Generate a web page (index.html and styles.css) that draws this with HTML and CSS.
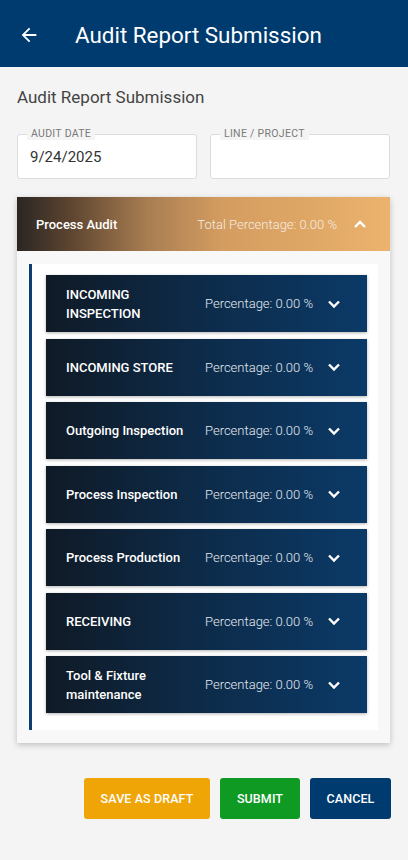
FILE: index.html
```html
<!DOCTYPE html>
<html>
<head>
<meta charset="utf-8">
<link rel="stylesheet" href="styles.css">
</head>
<body>
<header class="appbar">
  <svg class="back" width="22" height="22" viewBox="0 0 24 24"><path d="M20 11H7.83l5.59-5.59L12 4l-8 8 8 8 1.41-1.41L7.83 13H20v-2z" fill="#fff"/></svg>
  <h1 class="appbar-title">Audit Report Submission</h1>
</header>
<main class="page">
  <h2 class="subtitle">Audit Report Submission</h2>
  <div class="fields">
    <div class="field"><span class="field-label">AUDIT DATE</span><span class="field-value">9/24/2025</span></div>
    <div class="field"><span class="field-label">LINE / PROJECT</span><span class="field-value"></span></div>
  </div>
  <section class="card">
    <div class="card-head">
      <span class="card-title">Process Audit</span>
      <span class="card-pct">Total Percentage: 0.00 %</span>
      <svg class="chev" width="14" height="14" viewBox="0 0 14 14"><path d="M2 10l5-5 5 5" fill="none" stroke="#fff" stroke-width="2.4"/></svg>
    </div>
    <div class="card-body">
      <div class="panel">
        <div class="item"><span class="item-title">INCOMING INSPECTION</span><span class="item-pct">Percentage: 0.00 %</span><svg class="chev" width="14" height="14" viewBox="0 0 14 14"><path d="M2 4.5l5 5 5-5" fill="none" stroke="#fff" stroke-width="2.4"/></svg></div>
        <div class="item"><span class="item-title">INCOMING STORE</span><span class="item-pct">Percentage: 0.00 %</span><svg class="chev" width="14" height="14" viewBox="0 0 14 14"><path d="M2 4.5l5 5 5-5" fill="none" stroke="#fff" stroke-width="2.4"/></svg></div>
        <div class="item"><span class="item-title">Outgoing Inspection</span><span class="item-pct">Percentage: 0.00 %</span><svg class="chev" width="14" height="14" viewBox="0 0 14 14"><path d="M2 4.5l5 5 5-5" fill="none" stroke="#fff" stroke-width="2.4"/></svg></div>
        <div class="item"><span class="item-title">Process Inspection</span><span class="item-pct">Percentage: 0.00 %</span><svg class="chev" width="14" height="14" viewBox="0 0 14 14"><path d="M2 4.5l5 5 5-5" fill="none" stroke="#fff" stroke-width="2.4"/></svg></div>
        <div class="item"><span class="item-title">Process Production</span><span class="item-pct">Percentage: 0.00 %</span><svg class="chev" width="14" height="14" viewBox="0 0 14 14"><path d="M2 4.5l5 5 5-5" fill="none" stroke="#fff" stroke-width="2.4"/></svg></div>
        <div class="item"><span class="item-title">RECEIVING</span><span class="item-pct">Percentage: 0.00 %</span><svg class="chev" width="14" height="14" viewBox="0 0 14 14"><path d="M2 4.5l5 5 5-5" fill="none" stroke="#fff" stroke-width="2.4"/></svg></div>
        <div class="item"><span class="item-title">Tool &amp; Fixture maintenance</span><span class="item-pct">Percentage: 0.00 %</span><svg class="chev" width="14" height="14" viewBox="0 0 14 14"><path d="M2 4.5l5 5 5-5" fill="none" stroke="#fff" stroke-width="2.4"/></svg></div>
      </div>
    </div>
  </section>
  <div class="actions">
    <button class="btn btn-draft">SAVE AS DRAFT</button>
    <button class="btn btn-submit">SUBMIT</button>
    <button class="btn btn-cancel">CANCEL</button>
  </div>
</main>
</body>
</html>
```
FILE: styles.css
```css
* { box-sizing: border-box; }
html, body { margin: 0; padding: 0; }
body {
  width: 408px;
  min-height: 860px;
  background: #f4f4f4;
  font-family: Roboto, "Liberation Sans", Arial, sans-serif;
}
.appbar {
  height: 67px;
  background: #003b6f;
  display: flex;
  align-items: center;
  padding: 3px 0 0 18px;
}
.back { flex: none; }
.appbar-title {
  margin: 0 0 0 35px;
  font-size: 22.4px;
  font-weight: 400;
  color: #fff;
}
.page { padding: 0 17px 0 17px; }
.subtitle {
  margin: 0;
  padding-top: 20px;
  height: 61px;
  font-size: 17px;
  font-weight: 400;
  color: #444;
}
.fields {
  display: grid;
  grid-template-columns: 180px 180px;
  column-gap: 13px;
  margin-top: 6px;
}
.field {
  position: relative;
  height: 45px;
  background: #fff;
  border: 1px solid #dcdcdc;
  border-radius: 3px;
  display: flex;
  align-items: center;
  padding: 0 12px;
}
.field-label {
  position: absolute;
  top: -7px;
  left: 9px;
  padding: 0 4px;
  background: #f4f4f4;
  font-size: 10.5px;
  line-height: 12px;
  color: #7a7a7a;
  letter-spacing: 0.3px;
}
.field-value {
  font-size: 15px;
  color: #333;
  margin-top: 1px;
}
.card {
  margin-top: 18px;
  width: 373px;
  background: #f8f8f8;
  box-shadow: 0 2px 6px rgba(0,0,0,0.22);
}
.card-head {
  height: 54px;
  display: flex;
  align-items: center;
  padding: 0 23px 0 19px;
  background: linear-gradient(90deg, #2a2623 0%, #5c4430 14%, #a87e52 35%, #d49c60 55%, #e0a866 80%, #ecb36e 100%);
}
.card-title {
  font-size: 13px;
  font-weight: 500;
  color: #fff;
  flex: 1;
}
.card-pct {
  font-size: 13px;
  font-weight: 300;
  color: #f4ece2;
  margin-right: 16px;
}
.card-body {
  padding: 13px 12px 13px 12px;
}
.panel {
  background: #fff;
  border-left: 3px solid #0d3f73;
  padding: 11px 11px 17px 14px;
  display: flex;
  flex-direction: column;
  gap: 6.5px;
}
.item {
  height: 57px;
  display: flex;
  align-items: center;
  padding: 0 26px 0 20px;
  background: linear-gradient(90deg, #0f1a26 0%, #0d2a47 45%, #0b3a68 100%);
  box-shadow: 0 1px 3px rgba(0,0,0,0.3);
}
.item-title {
  flex: 1;
  font-size: 13px;
  font-weight: 500;
  color: #fff;
  line-height: 19px;
  padding-right: 8px;
}
.item-pct {
  font-size: 13px;
  font-weight: 300;
  color: #e6eaf0;
  margin-right: 14px;
}
.chev { flex: none; }
.actions {
  display: flex;
  justify-content: flex-end;
  gap: 10px;
  margin-top: 35px;
}
.btn {
  height: 41px;
  border: none;
  border-radius: 3px;
  color: #fff;
  font-family: Roboto, "Liberation Sans", Arial, sans-serif;
  font-size: 12.5px;
  font-weight: 500;
  letter-spacing: 0.1px;
}
.btn-draft { width: 126px; background: #f0a507; }
.btn-submit { width: 80px; background: #0f9a24; }
.btn-cancel { width: 81px; background: #003b6f; }
```
